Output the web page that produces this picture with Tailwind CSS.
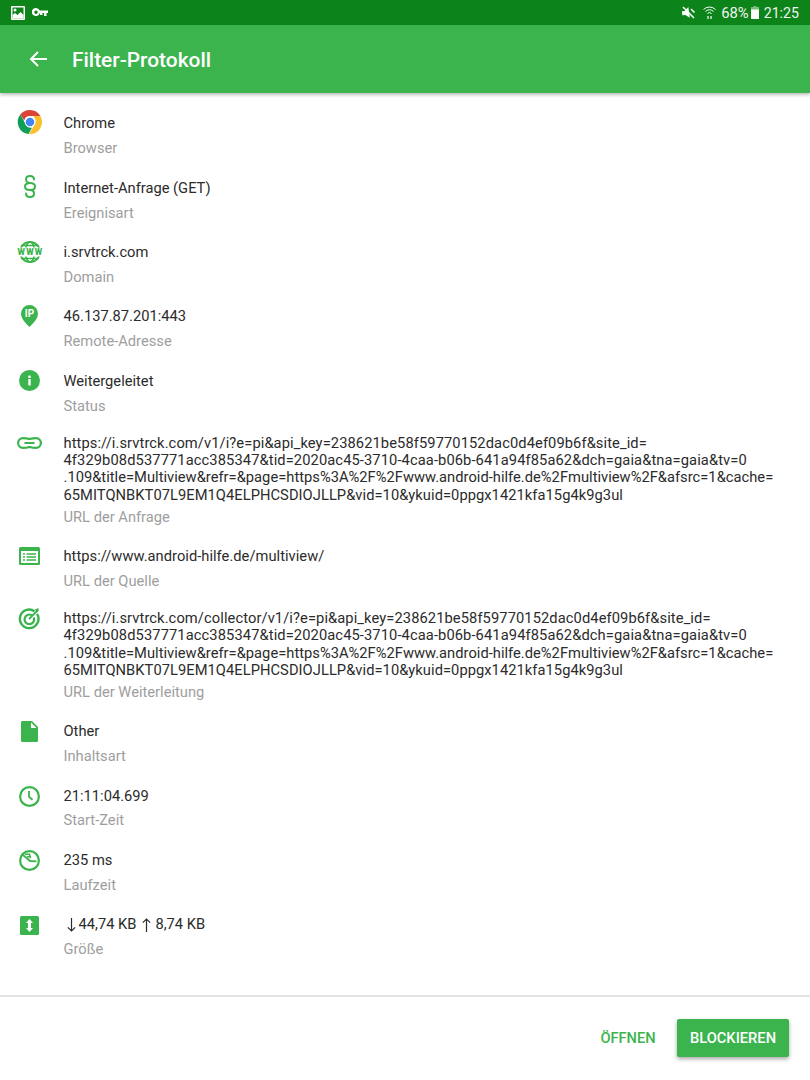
<!DOCTYPE html>
<html lang="de">
<head>
<meta charset="utf-8">
<script src="https://cdn.jsdelivr.net/npm/@tailwindcss/browser@4"></script>
</head>
<body class="m-0 bg-white">
<div class="w-[810px] h-[1080px] flex flex-col overflow-hidden font-['Roboto',sans-serif] text-[14.700px] leading-[17.400px] text-[#2b2b2b]">
  <div class="h-[25px] shrink-0 bg-[#0c8419] flex items-center justify-between pl-[11px] pr-[11px] text-white">
    <div class="flex items-center gap-[7px]">
      <svg class="w-[14px] h-[14px]" viewBox="0 0 14 14"><rect width="14" height="14" rx="1" fill="#fff"/><rect x="1.500" y="1.500" width="11" height="11" fill="#0c8419"/><circle cx="4" cy="4" r="1.500" fill="#fff"/><path d="M1.500 12.500V9l2.500-2 2.500 2 3-3 3 3v3.500z" fill="#fff"/></svg>
      <svg class="w-[16px] h-[9px]" viewBox="0 0 16 9"><path fill-rule="evenodd" d="M4 0a4 4 0 0 1 3.700 2.500H16v2.500h-1.500V8h-2.500V5h-1.500v2H8V5H7.700A4 4 0 1 1 4 0zm0 2.500a1.500 1.500 0 1 0 0 3.500 1.500 1.500 0 0 0 0-3.500z" fill="#fff"/></svg>
    </div>
    <div class="flex items-center">
      <svg class="w-[13px] h-[13px] mr-[8px]" viewBox="0 0 13 13"><path d="M0 4.500h3L7 1v11L3 8.500H0z" fill="#fff" transform="rotate(-8 6 6)"/><path d="M1 1l11 11" stroke="#fff" stroke-width="1.500"/><path d="M9 3l3.500 3.500" stroke="#fff" stroke-width="1.500"/></svg>
      <svg class="w-[13px] h-[13px] mr-[5px]" viewBox="0 0 13 13" fill="none" stroke="#fff" stroke-width="1"><path d="M.5 3.500a8.500 8.500 0 0 1 12 0M2.500 5.500a5.500 5.500 0 0 1 8 0M4.500 7.500a2.800 2.800 0 0 1 4 0"/><path d="M5 13V10M8 13V10" stroke-width="1.200"/></svg>
      <span class="text-[14.800px] leading-[26px] pt-px text-[#f2f2f2]">68%</span>
      <svg class="w-[8px] h-[13px] ml-[2px] mr-[5px]" viewBox="0 0 8 13"><path d="M2.500 0h3v1H8v12H0V1h2.500z" fill="#fff" fill-opacity=".45"/><rect y="3.500" width="8" height="9.500" fill="#fff"/></svg>
      <span class="text-[14.200px] leading-[26px] pt-px text-[#f2f2f2]">21:25</span>
    </div>
  </div>

  <header class="relative z-10 h-[68px] shrink-0 bg-[#3bb44d] flex items-center shadow-[0_2px_3px_rgba(0,0,0,0.25)] text-white">
    <svg class="ml-[29px] w-[18px] h-[16px]" viewBox="0 0 18 16" fill="none" stroke="#fff" stroke-width="2"><path d="M18 8H2M9 1L2 8l7 7"/></svg>
    <h1 class="ml-[25px] pt-[2px] text-[20.900px] font-medium leading-[24px]">Filter-Protokoll</h1>
  </header>

  <main class="flex-1 pt-[10.100px]">
    <div class="flex py-[9.675px]">
      <div class="w-[59px] h-[22.500px] -mt-[2px] flex items-center justify-center">
        <svg class="w-[24px] h-[24px] shrink-0 overflow-visible" viewBox="0 0 24 24"><path d="M12 0a12 12 0 0 1 10.400 6H12a6 6 0 0 0-5.800 4.400L2.300 4.500A12 12 0 0 1 12 0z" fill="#db4437"/><path d="M2.300 4.500l5.200 9.300A5.500 5.500 0 0 0 14 17.700l-3.500 6.200A12 12 0 0 1 2.300 4.500z" fill="#0f9d58"/><path d="M22.400 6A12 12 0 0 1 11 24l5.300-8.800A5.500 5.500 0 0 0 16 7.500V6z" fill="#fbc02d"/><circle cx="12" cy="12" r="5.300" fill="#fff"/><circle cx="12" cy="12" r="4.300" fill="#4285f4"/></svg>
      </div>
      <div class="ml-[4.500px]"><div class="h-[22.500px] flex items-center">Chrome</div><div class="mt-[4.950px] leading-[17.600px] text-[#9e9e9e]">Browser</div></div>
    </div>
    <div class="flex py-[9.675px]">
      <div class="w-[59px] h-[22.500px] -mt-[2px] flex items-center justify-center">
        <svg class="w-[12px] h-[23px] shrink-0 overflow-visible" viewBox="0 0 12 23" fill="none" stroke="#3bb44d" stroke-width="2" stroke-linecap="round"><path d="M10 4.500C10 2.300 8.200 1 6 1S2 2.300 2 4.300C2 6.700 4 8 6 8c2.700 0 5 1.200 5 3.500S8.800 15 6.500 15"/><path d="M6 8C3.300 8 1 9.200 1 11.500S3.200 15 6 15c2.200 0 4 1.300 4 3.500S8.200 22 6 22s-4-1.300-4-3.500"/></svg>
      </div>
      <div class="ml-[4.500px]"><div class="h-[22.500px] flex items-center">Internet-Anfrage (GET)</div><div class="mt-[4.950px] leading-[17.600px] text-[#9e9e9e]">Ereignisart</div></div>
    </div>
    <div class="flex py-[9.675px]">
      <div class="w-[59px] h-[22.500px] -mt-px flex items-center justify-center">
        <svg class="w-[26px] h-[22px] shrink-0 overflow-visible" viewBox="0 0 26 22" fill="none"><circle cx="13" cy="11" r="10" stroke="#3bb44d" stroke-width="1.800"/><ellipse cx="13" cy="11" rx="4.500" ry="10" stroke="#3bb44d" stroke-width="1.600"/><path d="M4 4.500h18M4 17.500h18" stroke="#3bb44d" stroke-width="1.400"/><rect x="-1" y="6.500" width="28" height="9" fill="#fff"/><text x="13.500" y="14.300" text-anchor="middle" font-family="Roboto" font-weight="900" font-size="8.500" letter-spacing="1.300" fill="#3bb44d">WWW</text></svg>
      </div>
      <div class="ml-[4.500px]"><div class="h-[22.500px] flex items-center">i.srvtrck.com</div><div class="mt-[4.950px] leading-[17.600px] text-[#9e9e9e]">Domain</div></div>
    </div>
    <div class="flex py-[9.675px]">
      <div class="w-[59px] h-[22.500px] -mt-px flex items-center justify-center">
        <svg class="w-[17px] h-[22px] shrink-0 overflow-visible" viewBox="0 0 17 22"><path d="M8.500 0A8.500 8.500 0 0 1 17 8.500c0 5-4.500 9.500-8.500 13.500C4.500 18 0 13.500 0 8.500A8.500 8.500 0 0 1 8.500 0z" fill="#3bb44d"/><text x="8.500" y="12" text-anchor="middle" font-family="Roboto" font-weight="700" font-size="10" fill="#fff">IP</text></svg>
      </div>
      <div class="ml-[4.500px]"><div class="h-[22.500px] flex items-center">46.137.87.201:443</div><div class="mt-[4.950px] leading-[17.600px] text-[#9e9e9e]">Remote-Adresse</div></div>
    </div>
    <div class="flex py-[9.675px]">
      <div class="w-[59px] h-[22.500px] -mt-px flex items-center justify-center">
        <svg class="w-[21px] h-[21px] shrink-0 overflow-visible" viewBox="0 0 21 21"><circle cx="10.500" cy="10.500" r="10.500" fill="#3bb44d"/><rect x="9.300" y="9" width="2.400" height="6.500" rx=".5" fill="#fff"/><rect x="9.300" y="5.500" width="2.400" height="2.400" rx=".5" fill="#fff"/></svg>
      </div>
      <div class="ml-[4.500px]"><div class="h-[22.500px] flex items-center">Weitergeleitet</div><div class="mt-[4.950px] leading-[17.600px] text-[#9e9e9e]">Status</div></div>
    </div>
    <div class="flex pt-[9.675px] pb-[9px]">
      <div class="w-[59px] h-[17.400px] flex items-center justify-center">
        <svg class="w-[25px] h-[12px] shrink-0 overflow-visible" viewBox="0 0 25 12" fill="none" stroke="#3bb44d" stroke-width="2.200"><path d="M6 1.100c2.500 0 4 0 5.500.8h2c1.500-.8 3-.8 5.500-.8a4.900 4.900 0 0 1 0 9.800c-2.500 0-4 0-5.500-.8h-2c-1.500.8-3 .8-5.500.8a4.900 4.900 0 0 1 0-9.800z"/><path d="M7.500 6h10" stroke-width="2"/></svg>
      </div>
      <div class="ml-[4.500px] whitespace-nowrap"><div class="tracking-[0.09px]">https://i.srvtrck.com/v1/i?e=pi&amp;api_key=238621be58f59770152dac0d4ef09b6f&amp;site_id=</div><div class="tracking-[0.1px]">4f329b08d537771acc385347&amp;tid=2020ac45-3710-4caa-b06b-641a94f85a62&amp;dch=gaia&amp;tna=gaia&amp;tv=0</div><div class="tracking-[0.02px]">.109&amp;title=Multiview&amp;refr=&amp;page=https%3A%2F%2Fwww.android-hilfe.de%2Fmultiview%2F&amp;afsrc=1&amp;cache=</div><div class="tracking-[0.05px]">65MITQNBKT07L9EM1Q4ELPHCSDIOJLLP&amp;vid=10&amp;ykuid=0ppgx1421kfa15g4k9g3ul</div><div class="mt-[4.950px] leading-[17.600px] text-[#9e9e9e]">URL der Anfrage</div></div>
    </div>
    <div class="flex py-[9.675px]">
      <div class="w-[59px] h-[22.500px] -mt-px flex items-center justify-center">
        <svg class="w-[21px] h-[18px] shrink-0 overflow-visible" viewBox="0 0 21 18"><rect width="21" height="18" rx="1.500" fill="#3bb44d"/><rect x="2" y="4" width="17" height="12" fill="#fff"/><path d="M4 7h2M7.500 7H17M4 10h2M7.500 10H17M4 13h2M7.500 13H17" stroke="#3bb44d" stroke-width="1.500"/></svg>
      </div>
      <div class="ml-[4.500px]"><div class="h-[22.500px] flex items-center tracking-[0.03px]">https://www.android-hilfe.de/multiview/</div><div class="mt-[4.950px] leading-[17.600px] text-[#9e9e9e]">URL der Quelle</div></div>
    </div>
    <div class="flex pt-[9.675px] pb-[9px]">
      <div class="w-[59px] h-[17.400px] flex items-center justify-center">
        <svg class="w-[21px] h-[21px] shrink-0 overflow-visible" viewBox="0 0 21 21" fill="none" stroke="#3bb44d"><path d="M15.500 3.200A9.300 9.300 0 1 0 18 5.800" stroke-width="2.400"/><path d="M12.800 7.200A4.800 4.800 0 1 0 14.800 9.500" stroke-width="2.200"/><path d="M10 11L19 2" stroke-width="1.800"/><path d="M16 1.500l3.500-1.500v3l-2 1.500z" fill="#3bb44d" stroke="none"/></svg>
      </div>
      <div class="ml-[4.500px] whitespace-nowrap"><div class="tracking-[0.09px]">https://i.srvtrck.com/collector/v1/i?e=pi&amp;api_key=238621be58f59770152dac0d4ef09b6f&amp;site_id=</div><div class="tracking-[0.1px]">4f329b08d537771acc385347&amp;tid=2020ac45-3710-4caa-b06b-641a94f85a62&amp;dch=gaia&amp;tna=gaia&amp;tv=0</div><div class="tracking-[0.02px]">.109&amp;title=Multiview&amp;refr=&amp;page=https%3A%2F%2Fwww.android-hilfe.de%2Fmultiview%2F&amp;afsrc=1&amp;cache=</div><div class="tracking-[0.05px]">65MITQNBKT07L9EM1Q4ELPHCSDIOJLLP&amp;vid=10&amp;ykuid=0ppgx1421kfa15g4k9g3ul</div><div class="mt-[4.950px] leading-[17.600px] text-[#9e9e9e]">URL der Weiterleitung</div></div>
    </div>
    <div class="flex py-[9.675px]">
      <div class="w-[59px] h-[22.500px] flex items-center justify-center">
        <svg class="w-[17px] h-[21px] shrink-0 overflow-visible" viewBox="0 0 17 21"><path d="M1.500 0H11l6 6v13.500a1.500 1.500 0 0 1-1.500 1.500h-14A1.500 1.500 0 0 1 0 19.500v-18A1.500 1.500 0 0 1 1.500 0z" fill="#3bb44d"/><path d="M10 1.500L15.500 7H10z" fill="#fff"/></svg>
      </div>
      <div class="ml-[4.500px]"><div class="h-[22.500px] flex items-center">Other</div><div class="mt-[4.950px] leading-[17.600px] text-[#9e9e9e]">Inhaltsart</div></div>
    </div>
    <div class="flex py-[9.675px]">
      <div class="w-[59px] h-[22.500px] flex items-center justify-center">
        <svg class="w-[21px] h-[21px] shrink-0 overflow-visible" viewBox="0 0 21 21" fill="none" stroke="#3bb44d" stroke-width="2.200"><circle cx="10.500" cy="10.500" r="9.400"/><path d="M10 5v5.800l3.500 3" stroke-width="1.800"/></svg>
      </div>
      <div class="ml-[4.500px]"><div class="h-[22.500px] flex items-center">21:11:04.699</div><div class="mt-[4.950px] leading-[17.600px] text-[#9e9e9e]">Start-Zeit</div></div>
    </div>
    <div class="flex py-[9.675px]">
      <div class="w-[59px] h-[22.500px] flex items-center justify-center">
        <svg class="w-[21px] h-[21px] shrink-0 overflow-visible" viewBox="0 0 21 21" fill="none" stroke="#3bb44d" stroke-width="2.200"><circle cx="10.500" cy="10.500" r="9.400"/><path d="M3.500 4.500L11 11l6.500.3" stroke-width="1.800"/><path d="M6 4.200h5M8 6.800h4M10.500 4.200l1 4" stroke-width="1.500"/></svg>
      </div>
      <div class="ml-[4.500px]"><div class="h-[22.500px] flex items-center">235 ms</div><div class="mt-[4.950px] leading-[17.600px] text-[#9e9e9e]">Laufzeit</div></div>
    </div>
    <div class="flex py-[9.675px]">
      <div class="w-[59px] h-[22.500px] flex items-center justify-center">
        <svg class="w-[19px] h-[19px] shrink-0 overflow-visible" viewBox="0 0 19 19"><rect width="19" height="19" rx="1.500" fill="#3bb44d"/><path d="M9.500 3l3.500 4H11v5h2l-3.500 4L6 12h2V7H6z" fill="#fff"/></svg>
      </div>
      <div class="ml-[4.500px]">
        <div class="h-[22.500px] flex items-center">
          <svg class="w-[9px] h-[14px] ml-[3px] mr-[3px]" viewBox="0 0 9 14" fill="none" stroke="#2b2b2b" stroke-width="1.200"><path d="M4.500 0v13M.8 9.300l3.700 3.700 3.700-3.700"/></svg>
          <span>44,74 KB</span>
          <svg class="w-[9px] h-[14px] ml-[6px] mr-[4px]" viewBox="0 0 9 14" fill="none" stroke="#2b2b2b" stroke-width="1.200"><path d="M4.500 14V1M.8 4.700L4.500 1l3.700 3.700"/></svg>
          <span>8,74 KB</span>
        </div>
        <div class="mt-[4.950px] leading-[17.600px] text-[#9e9e9e]">Größe</div>
      </div>
    </div>
  </main>

  <footer class="h-[85px] shrink-0 border-t-2 border-[#e3e3e3] flex items-start justify-end pt-[22px] pr-[21px]">
    <button class="h-[40px] w-[66px] mr-[16px] text-[14.600px] font-medium text-[#3bb44d]">ÖFFNEN</button>
    <button class="h-[38px] pt-[2px] w-[112px] rounded-[2px] bg-[#3bb44d] text-[14.700px] font-medium text-white shadow-[0_2px_4px_rgba(0,0,0,0.35)]">BLOCKIEREN</button>
  </footer>
</div>
</body>
</html>
